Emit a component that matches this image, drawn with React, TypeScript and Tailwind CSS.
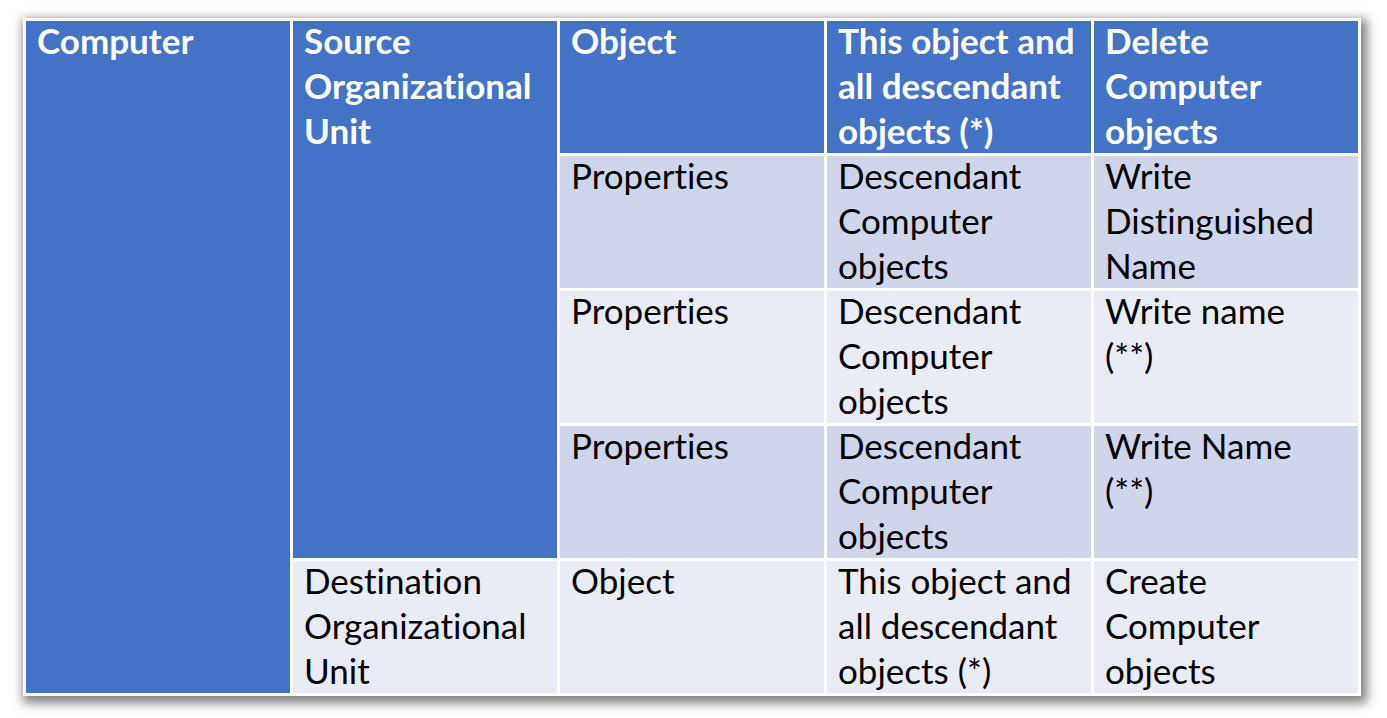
const blue = 'bg-[#4472C4] text-white font-bold';
const dark = 'bg-[#CFD5EA] text-black';
const light = 'bg-[#E9EBF5] text-black';

type CellProps = { lines: string[]; tone: string; className?: string };

// first line gets a tighter line box so the text sits near the top edge, like the source table
const Cell = ({ lines, tone, className = '' }: CellProps) => (
  <div className={`${tone} ${className} pl-[11px]`}>
    {lines.map((l, i) => (
      <div
        key={i}
        className={i === 0 ? 'whitespace-nowrap leading-[39px] mb-[3px]' : 'whitespace-nowrap leading-[45px]'}
      >
        {l}
      </div>
    ))}
  </div>
);

const rows = [
  { tone: dark, obj: 'Properties', applies: ['Descendant', 'Computer', 'objects'], perm: ['Write', 'Distinguished', 'Name'] },
  { tone: light, obj: 'Properties', applies: ['Descendant', 'Computer', 'objects'], perm: ['Write name', '(**)'] },
  { tone: dark, obj: 'Properties', applies: ['Descendant', 'Computer', 'objects'], perm: ['Write Name', '(**)'] },
];

export default function App() {
  return (
    <div className="w-[1387px] h-[718px] bg-white pt-[18px] pl-[23px] font-['Lato',sans-serif] text-[35px] [font-variant-ligatures:none]">
      <div className="w-[1338px] h-[678px] bg-white p-[3px] shadow-[3px_4px_10px_3px_rgba(0,0,0,0.5)]">
        <div className="grid h-full grid-cols-5 grid-rows-5 gap-[3px] bg-white">
          <Cell tone={blue} className="row-span-5" lines={['Computer']} />
          <Cell tone={blue} className="row-span-4" lines={['Source', 'Organizational', 'Unit']} />
          <Cell tone={blue} lines={['Object']} />
          <Cell tone={blue} lines={['This object and', 'all descendant', 'objects (*)']} />
          <Cell tone={blue} lines={['Delete', 'Computer', 'objects']} />

          {rows.map((r, i) => (
            <div key={i} className="contents">
              <Cell tone={r.tone} lines={[r.obj]} />
              <Cell tone={r.tone} lines={r.applies} />
              <Cell tone={r.tone} lines={r.perm} />
            </div>
          ))}

          <Cell tone={light} lines={['Destination', 'Organizational', 'Unit']} />
          <Cell tone={light} lines={['Object']} />
          <Cell tone={light} lines={['This object and', 'all descendant', 'objects (*)']} />
          <Cell tone={light} lines={['Create', 'Computer', 'objects']} />
        </div>
      </div>
    </div>
  );
}
